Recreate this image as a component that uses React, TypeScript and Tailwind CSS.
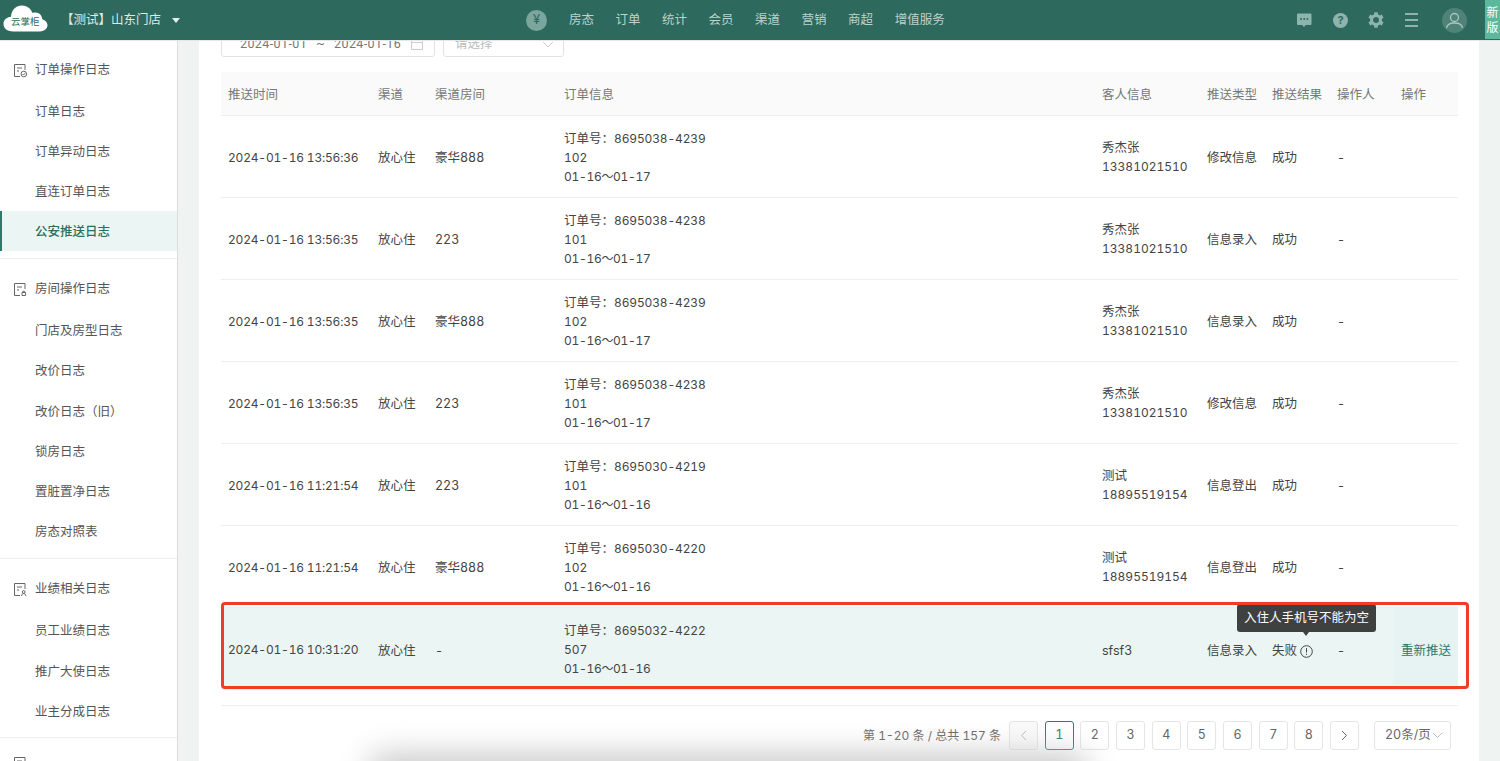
const FONT = "font-['Inter','Noto_Sans_CJK_SC',sans-serif] tabular-nums";
const COLS = "grid grid-cols-[150px_57px_129px_538px_105px_65px_65px_64px_64px]";

type Row = {
  time: string;
  channel: string;
  room: string;
  order: string;
  roomNo: string;
  dates: string;
  guest: string;
  phone?: string;
  type: string;
  result: string;
};

const rows: Row[] = [
  { time: "2024-01-16 13:56:36", channel: "放心住", room: "豪华888", order: "8695038-4239", roomNo: "102", dates: "01-16～01-17", guest: "秀杰张", phone: "13381021510", type: "修改信息", result: "成功" },
  { time: "2024-01-16 13:56:35", channel: "放心住", room: "223", order: "8695038-4238", roomNo: "101", dates: "01-16～01-17", guest: "秀杰张", phone: "13381021510", type: "信息录入", result: "成功" },
  { time: "2024-01-16 13:56:35", channel: "放心住", room: "豪华888", order: "8695038-4239", roomNo: "102", dates: "01-16～01-17", guest: "秀杰张", phone: "13381021510", type: "信息录入", result: "成功" },
  { time: "2024-01-16 13:56:35", channel: "放心住", room: "223", order: "8695038-4238", roomNo: "101", dates: "01-16～01-17", guest: "秀杰张", phone: "13381021510", type: "修改信息", result: "成功" },
  { time: "2024-01-16 11:21:54", channel: "放心住", room: "223", order: "8695030-4219", roomNo: "101", dates: "01-16～01-16", guest: "测试", phone: "18895519154", type: "信息登出", result: "成功" },
  { time: "2024-01-16 11:21:54", channel: "放心住", room: "豪华888", order: "8695030-4220", roomNo: "102", dates: "01-16～01-16", guest: "测试", phone: "18895519154", type: "信息登出", result: "成功" },
];

const sections = [
  { title: "订单操作日志", mark: "check", items: ["订单日志", "订单异动日志", "直连订单日志", "公安推送日志"] },
  { title: "房间操作日志", mark: "lock", items: ["门店及房型日志", "改价日志", "改价日志（旧）", "锁房日志", "置脏置净日志", "房态对照表"] },
  { title: "业绩相关日志", mark: "user", items: ["员工业绩日志", "推广大使日志", "业主分成日志"] },
];

function DocIcon({ mark }: { mark: string }) {
  return (
    <svg width="15" height="15" viewBox="0 0 15 15" fill="none" stroke="#666" strokeWidth="1" className="shrink-0">
      <path d="M7 13.5H1.5V1.5h10.5V7" />
      <path d="M4 5h5M4 8h2" />
      {mark === "check" && <circle cx="10.8" cy="11" r="2.8" />}
      {mark === "check" && <path d="M9.5 11l1 1 1.6-1.8" />}
      {mark === "lock" && <path d="M9 10.5h3.6v3H9zM9.9 10.5V9.3h1.8v1.2" />}
      {mark === "user" && <path d="M8.5 14c.2-1.6 1-2.4 2.2-2.4s2 .8 2.2 2.4M10.700 11.400a1.400 1.400 0 1 0 0-2.800 1.400 1.400 0 0 0 0 2.800z" />}
    </svg>
  );
}

function Logo() {
  return (
    <div className="relative ml-[3px] mt-[-3px] h-[27px] w-[45px] shrink-0">
      <svg width="45" height="27" viewBox="0 4 45 23.500" preserveAspectRatio="none" fill="#fff" className="absolute left-0 top-0">
        <path d="M10 27C4 27 .5 24 .5 20.5S3.5 14.500 8 14.200C8.500 8 13 4.500 19 4.500c5 0 8.500 2.500 10.500 6.500 1-.4 2-.5 3-.5 4 0 6.500 2.800 6.800 5.800 3 .8 5.200 2.700 5.200 5.200 0 3-3 5.500-7.500 5.500z" />
      </svg>
      <span className="absolute left-[8px] top-[11px] whitespace-nowrap text-[9.500px] leading-[12px] text-[#2f6b5e]">云掌柜</span>
    </div>
  );
}

function GearIcon() {
  return (
    <svg width="16" height="16" viewBox="0 0 16 16" className="mr-[21px]">
      <circle cx="8" cy="8" r="4.500" fill="none" stroke="#8db5ae" strokeWidth="3" />
      {[0, 60, 120, 180, 240, 300].map((a) => (
        <rect key={a} x="6.200" y="0.300" width="3.600" height="3" fill="#8db5ae" transform={`rotate(${a} 8 8)`} />
      ))}
    </svg>
  );
}

function TopIcons() {
  return (
    <div className="flex items-center">
      <svg width="16" height="16" viewBox="0 0 16 16" className="mr-[21px]">
        <path d="M2 1.500h12.500a1 1 0 0 1 1 1v9.500a1 1 0 0 1-1 1H9.800L8 15l-1.800-2H2a1 1 0 0 1-1-1V2.500a1 1 0 0 1 1-1z" fill="#8db5ae" />
        <circle cx="5" cy="7" r="1" fill="#2d695d" />
        <circle cx="8.200" cy="7" r="1" fill="#2d695d" />
        <circle cx="11.400" cy="7" r="1" fill="#2d695d" />
      </svg>
      <div className="mr-[20px] flex h-[15px] w-[15px] items-center justify-center rounded-full bg-[#8db5ae] text-[11px] font-bold leading-none text-[#2d695d]">?</div>
      <GearIcon />
      <div className="mr-[24px] flex w-[13px] flex-col gap-[4px]">
        <div className="h-[2px] bg-[#8db5ae]" />
        <div className="h-[2px] bg-[#8db5ae]" />
        <div className="h-[2px] bg-[#8db5ae]" />
      </div>
      <svg width="25" height="25" viewBox="0 0 25 25" className="mr-[33px]">
        <circle cx="12.500" cy="12.500" r="12.500" fill="#4f8378" />
        <circle cx="12.500" cy="9.500" r="4" fill="none" stroke="#a9c8c1" strokeWidth="1.300" />
        <path d="M4.500 20c.5-3.500 3.500-5 8-5s7.500 1.500 8 5" fill="none" stroke="#a9c8c1" strokeWidth="1.300" />
      </svg>
    </div>
  );
}

function Header() {
  return (
    <header className="relative z-10 flex h-[41px] shrink-0 items-center border-b border-[#e4e9e8] bg-[#2d695d]">
      <Logo />
      <span className="ml-[13px] text-[12.500px] text-[#dfe9e6]">【测试】山东门店</span>
      <span className="ml-[11px] h-0 w-0 border-x-[4.500px] border-t-[5px] border-x-transparent border-t-[#e8efed]" />
      <div className="ml-[346px] flex h-[21px] w-[21px] items-center justify-center rounded-full bg-[#7ba69d] text-[13px] text-[#2d695d]">¥</div>
      <nav className="ml-[22px] flex gap-[21.500px] text-[12.500px] text-[#bcd2cc]">
        {["房态", "订单", "统计", "会员", "渠道", "营销", "商超", "增值服务"].map((n) => (
          <span key={n} className="whitespace-nowrap">{n}</span>
        ))}
      </nav>
      <div className="ml-auto">
        <TopIcons />
      </div>
      <div className="absolute right-0 top-0 flex h-[39px] w-[15px] flex-col items-center justify-center bg-[#5cb89c] text-[12px] leading-[15px] text-white">
        <span>新</span>
        <span>版</span>
      </div>
    </header>
  );
}

function Sidebar() {
  return (
    <aside className="h-full w-[178px] shrink-0 overflow-hidden border-r border-[#d9dedd] bg-white text-[12.500px] text-[#555]">
      {sections.map((s) => (
        <div key={s.title} className="border-b border-[#eeeeee] pb-[7px] pt-[9px] first:pt-[7px]">
          <div className="flex h-[40px] items-center gap-[7px] pl-[13px] pt-[4px]">
            <DocIcon mark={s.mark} />
            <span>{s.title}</span>
          </div>
          <div className="pt-[2px]">
            {s.items.map((item) => {
              const active = item === "公安推送日志";
              return (
                <div
                  key={item}
                  className={
                    active
                      ? "flex h-[40px] items-center border-l-[2px] border-[#2d7a6b] bg-[#ebf5f3] pl-[33px] pt-[3px] font-medium text-[#2d6f62]"
                      : "flex h-[40.200px] items-center pl-[35px] pt-[4px]"
                  }
                >
                  {item}
                </div>
              );
            })}
          </div>
        </div>
      ))}
      <div className="flex h-[40px] items-center pl-[13px] pt-[11px]">
        <DocIcon mark="check" />
      </div>
    </aside>
  );
}

function Filters() {
  return (
    <div className="flex h-[29px] gap-[8px] text-[12.500px]">
      <div className="flex h-[29px] w-[214px] items-center whitespace-nowrap rounded-b-[3px] border border-[#e2e2e2] pl-[18px] pt-[3px] font-['Roboto','Noto_Sans_CJK_SC',sans-serif] tracking-[0.4px] text-[#777]">
        <span>2024-01-01</span>
        <span className="mx-[9px]">~</span>
        <span>2024-01-16</span>
        <svg width="12" height="12" viewBox="0 0 12 12" fill="none" stroke="#ccc" className="ml-[10px] shrink-0">
          <path d="M.5 1.500h11v10H.5zM.5 4.500h11" />
        </svg>
      </div>
      <div className="flex h-[29px] w-[121px] items-center rounded-b-[3px] border border-[#e2e2e2] pl-[11px] pt-[3px] text-[#bbb]">
        <span>请选择</span>
        <svg width="12" height="7" viewBox="0 0 12 7" fill="none" stroke="#ccc" className="ml-auto mr-[9px]">
          <path d="M1 1l5 5 5-5" />
        </svg>
      </div>
    </div>
  );
}

function Cell({ children, className = "pt-[4px]" }: { children: React.ReactNode; className?: string }) {
  return <div className={"flex flex-col justify-center px-[7px] " + className}>{children}</div>;
}

function TimeCell({ time }: { time: string }) {
  return <Cell className="whitespace-nowrap pt-[2px] text-[12px] tracking-[-0.2px]">{time}</Cell>;
}

function OrderCell({ order, roomNo, dates }: { order: string; roomNo: string; dates: string }) {
  return (
    <Cell className="pt-[1px] leading-[19px]">
      <div>
        订单号：<span className="text-[12px] tracking-[-0.15px]">{order}</span>
      </div>
      <div className="text-[12px]">{roomNo}</div>
      <div className="text-[12px] tracking-[-0.3px]">{dates}</div>
    </Cell>
  );
}

function Table() {
  return (
    <div className="relative mt-[15px] text-[12.500px] text-[#444]">
      <div className={COLS + " h-[44px] border-b border-[#eeeeee] bg-[#fafafa] text-[#777]"}>
        {["推送时间", "渠道", "渠道房间", "订单信息", "客人信息", "推送类型", "推送结果", "操作人", "操作"].map((h) => (
          <Cell key={h} className="whitespace-nowrap pt-[4px]">{h}</Cell>
        ))}
      </div>
      {rows.map((r, i) => (
        <div key={i} className={COLS + " h-[82px] border-b border-[#eeeeee]"}>
          <TimeCell time={r.time} />
          <Cell>{r.channel}</Cell>
          <Cell>{r.room}</Cell>
          <OrderCell order={r.order} roomNo={r.roomNo} dates={r.dates} />
          <Cell className="pt-[1px] leading-[19px]">
            <div>{r.guest}</div>
            <div className="text-[12px]">{r.phone}</div>
          </Cell>
          <Cell className="whitespace-nowrap pt-[4px]">{r.type}</Cell>
          <Cell>{r.result}</Cell>
          <Cell>-</Cell>
          <Cell>{""}</Cell>
        </div>
      ))}
      <div className={COLS + " h-[82px] bg-[#ebf5f3]"}>
        <TimeCell time="2024-01-16 10:31:20" />
        <Cell>放心住</Cell>
        <Cell>-</Cell>
        <OrderCell order="8695032-4222" roomNo="507" dates="01-16～01-16" />
        <Cell>sfsf3</Cell>
        <Cell className="whitespace-nowrap pt-[4px]">信息录入</Cell>
        <Cell>
          <div className="flex items-center gap-[3px]">
            失败
            <svg width="13" height="13" viewBox="0 0 13 13" fill="none" stroke="#444">
              <circle cx="6.500" cy="6.500" r="5.800" />
              <path d="M6.500 3.200v4.300M6.500 8.700v1.200" />
            </svg>
          </div>
        </Cell>
        <Cell>-</Cell>
        <Cell className="whitespace-nowrap bg-[#e6f3f2] pt-[4px] text-[#2d7a6b]">重新推送</Cell>
      </div>
      {/* tooltip + red annotation sit on top of the row */}
      <div className="absolute left-[1016px] top-[532px] whitespace-nowrap rounded-[3px] bg-[#3f4141] px-[7px] py-[5px] text-[12.500px] leading-[18px] text-white">
        入住人手机号不能为空
        <span className="absolute left-[65.500px] top-full h-0 w-0 border-x-[3.500px] border-t-[4px] border-x-transparent border-t-[#3f4141]" />
      </div>
      <div className="pointer-events-none absolute left-0 top-[530px] h-[87px] w-[1248px] rounded-[4px] border-[3px] border-[#ee3f24]" />
    </div>
  );
}

function Pager() {
  const base = "flex h-[29px] w-[29px] items-center justify-center rounded-[3px] border";
  return (
    <div className="mt-[15px] flex items-center justify-end pr-[7px] text-[12.500px] text-[#666]">
      <span className="mr-[8px] text-[12px]">第 1-20 条 / 总共 157 条</span>
      <div className="flex gap-[6.660px]">
        <div className={base + " border-[#e5e5e5] bg-[#fafafa] text-[#bbb]"}>
          <svg width="7" height="11" viewBox="0 0 7 11" fill="none" stroke="currentColor"><path d="M6 1L1.500 5.500 6 10" /></svg>
        </div>
        {[1, 2, 3, 4, 5, 6, 7, 8].map((n) => (
          <div key={n} className={n === 1 ? base + " border-[#2d7a6b] bg-white text-[#2d7a6b]" : base + " border-[#e5e5e5] bg-white"}>{n}</div>
        ))}
        <div className={base + " border-[#e5e5e5] bg-white"}>
          <svg width="7" height="11" viewBox="0 0 7 11" fill="none" stroke="currentColor"><path d="M1 1l4.500 4.500L1 10" /></svg>
        </div>
      </div>
      <div className="ml-[15px] flex h-[29px] w-[77px] items-center rounded-[3px] border border-[#e5e5e5] pl-[10px]">
        <span className="whitespace-nowrap">20条/页</span>
        <svg width="11" height="7" viewBox="0 0 11 7" fill="none" stroke="#bbb" className="ml-[1px]"><path d="M1 1l4.500 4.500L10 1" /></svg>
      </div>
    </div>
  );
}

export default function App() {
  return (
    <div className={"flex h-[761px] w-[1500px] flex-col overflow-hidden " + FONT}>
      <Header />
      <div className="flex min-h-0 flex-1">
        <Sidebar />
        <main className="relative min-w-0 flex-1 overflow-hidden bg-[#eff3f2] pl-[21px] pr-[21px]">
          <div className="-mt-[13px] h-[733px] bg-white pl-[22px] pr-[21px]">
            <Filters />
            <Table />
            <div className="mt-[15px] border-t border-[#eeeeee]" />
            <Pager />
          </div>
          <div className="pointer-events-none absolute bottom-[-28px] left-[190px] h-[34px] w-[720px] rounded-full bg-[#c4c4c4] blur-[16px]" />
        </main>
      </div>
    </div>
  );
}
